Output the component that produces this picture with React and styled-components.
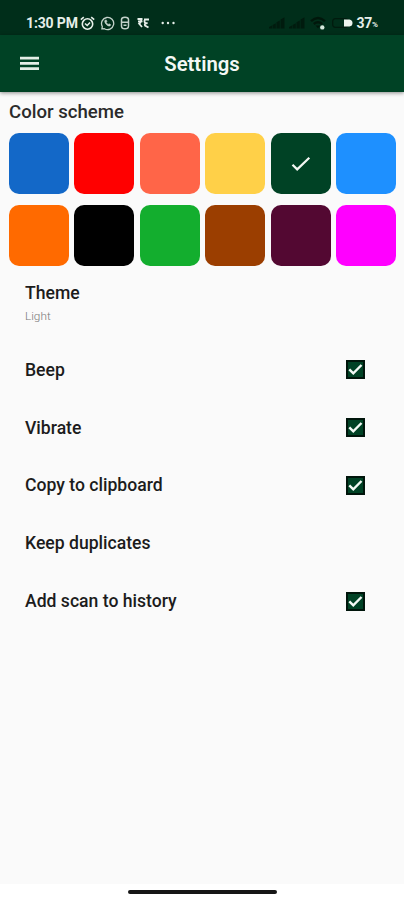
import React, { useState } from 'react';
import styled, { createGlobalStyle } from 'styled-components';

const GlobalStyle = createGlobalStyle`
  * {
    box-sizing: border-box;
  }

  body {
    margin: 0;
    background: #fafafa;
    font-family: Roboto, "Liberation Sans", sans-serif;
  }
`;

const Screen = styled.div`
  display: flex;
  flex-direction: column;
  width: 404px;
  height: 900px;
  background: #fafafa;
  color: #1c1c1c;
  overflow: hidden;
`;

const StatusBar = styled.div`
  display: flex;
  justify-content: space-between;
  height: 35px;
  flex-shrink: 0;
  padding: 10px 25px 0 26px;
  background: #002e1a;
  color: #e6efe9;
`;

const StatusGroup = styled.div`
  display: flex;
  align-items: center;
  height: 26px;
`;

const Clock = styled.span`
  width: 54px;
  font-size: 14px;
  font-weight: 700;
  letter-spacing: -0.15px;
  white-space: nowrap;
`;

const StatusIcon = styled.svg`
  display: block;
  flex-shrink: 0;
  margin-left: ${props => props.$gap || 0}px;
`;

const BatteryLevel = styled.span`
  margin-left: 4px;
  font-size: 14px;
  font-weight: 700;
  letter-spacing: -0.3px;
`;

const Percent = styled.span`
  width: 7px;
  padding-top: 3px;
  font-size: 8px;
  font-weight: 700;
`;

const Header = styled.header`
  display: grid;
  grid-template-columns: 60px 1fr 60px;
  align-items: center;
  height: 57px;
  flex-shrink: 0;
  background: #004225;
  color: #f4f8f5;
  box-shadow: 0 1px 4px rgba(0, 0, 0, 0.45);
  z-index: 1;
`;

const MenuButton = styled.button`
  display: flex;
  padding: 0 0 0 20px;
  border: 0;
  background: none;
`;

const Title = styled.h1`
  margin: 0;
  font-size: 20.3px;
  font-weight: 600;
  line-height: 24px;
  text-align: center;
`;

const Content = styled.main`
  flex: 1;
`;

const SectionTitle = styled.h2`
  margin: 0;
  padding: 9px 9px 0;
  font-size: 18.6px;
  font-weight: 500;
  line-height: 22px;
  color: #2b2b2b;
`;

const Swatches = styled.div`
  display: grid;
  grid-template-columns: repeat(6, 60px);
  column-gap: 5.4px;
  row-gap: 11px;
  padding: 10px 9px 0;
`;

const Swatch = styled.button`
  display: flex;
  align-items: center;
  justify-content: center;
  height: 61px;
  padding: 0;
  border: 0;
  border-radius: 10px;
  background: ${props => props.$color};
`;

const ThemeItem = styled.div`
  height: 75px;
  padding: 17px 25px 0;
`;

const Label = styled.span`
  display: block;
  font-size: 17.6px;
  font-weight: 500;
  line-height: 20px;
`;

const Value = styled.span`
  display: block;
  margin-top: 6px;
  font-size: 11.8px;
  font-weight: 300;
  line-height: 14px;
  color: #777;
`;

const SettingItem = styled.div`
  display: flex;
  align-items: center;
  justify-content: space-between;
  height: 57.8px;
  padding: 0 39px 0 25px;
`;

const Checkbox = styled.button`
  display: flex;
  align-items: center;
  justify-content: center;
  width: 19px;
  height: 19px;
  padding: 0;
  border: 2px solid #00150b;
  background: #004225;
`;

const NavBar = styled.footer`
  display: flex;
  justify-content: center;
  height: 16px;
  flex-shrink: 0;
  padding-top: 6px;
  background: #fff;
`;

const NavHandle = styled.div`
  width: 149px;
  height: 4px;
  border-radius: 2px;
  background: #161616;
`;

const COLORS = [
  '#1368c8', '#ff0000', '#ff6548', '#ffd048', '#004225', '#1e90ff',
  '#ff6a00', '#000000', '#13ae2e', '#9b3e00', '#530832', '#ff00ff',
];

const SETTINGS = [
  { key: 'beep', label: 'Beep' },
  { key: 'vibrate', label: 'Vibrate' },
  { key: 'clipboard', label: 'Copy to clipboard' },
  { key: 'duplicates', label: 'Keep duplicates' },
  { key: 'history', label: 'Add scan to history' },
];

const AlarmIcon = () => (
  <StatusIcon $gap={0} width="15" height="15" viewBox="0 0 15 15" fill="none" stroke="currentColor" strokeWidth="1.6">
    <circle cx="7.5" cy="8" r="5.2" />
    <path d="M.8 3.6l3-2.5M14.2 3.6l-3-2.5M5 7.5l2.2 2L10 6.5" />
  </StatusIcon>
);

const CallIcon = () => (
  <StatusIcon $gap={5} width="15" height="15" viewBox="0 0 15 15" fill="none" stroke="currentColor" strokeWidth="1.3" opacity="0.85">
    <path d="M1.9 12.9l.4-2.4A6.1 6.1 0 1 1 4.4 12.700z" />
    <path d="M5 4.2c-1.4 2 2.4 6.6 5.1 5.8l.6-1.4-1.7-.9-.8.7C7.3 8 6.5 7 6.3 6.3l.7-.8-.7-1.6z" fill="currentColor" strokeWidth="0.5" />
  </StatusIcon>
);

const LockIcon = () => (
  <StatusIcon $gap={5} width="10" height="14" viewBox="0 0 10 14" fill="none" stroke="currentColor" strokeWidth="1.5" opacity="0.85">
    <path d="M1.5 6V3.5Q1.5 1.200 5 1.200t3.500 2.300V6M1.500 6.200h7V10Q8.500 12.800 5 12.800T1.500 10zM3.500 9.300h3" />
  </StatusIcon>
);

const RupeeIcon = () => (
  <StatusIcon $gap={7} width="13" height="12" viewBox="0 0 13 12" fill="none" stroke="currentColor" strokeWidth="1.8">
    <path d="M.5 2h5M1 4.3h4.5M2 2q3 0 2 2.5T1.5 6l3.500 4M7 2.500h5M11.500 2.500Q7 2 7.500 4.500t3 1.500Q7 6.500 8 8.500l3.500 2" />
  </StatusIcon>
);

const MoreIcon = () => (
  <StatusIcon $gap={11} width="15" height="4" viewBox="0 0 15 4" fill="currentColor">
    <circle cx="1.7" cy="2" r="1.2" />
    <circle cx="7" cy="2" r="1.2" />
    <circle cx="12.5" cy="2" r="1.2" />
  </StatusIcon>
);

const SignalIcon = ({ gap }) => (
  <StatusIcon $gap={gap} width="16" height="12" viewBox="0 0 16 12" fill="#001b0e">
    <path d="M0 11.5V10l3-1.5v3zM3.6 11.5V8l3.2-1.7v5.2zM7.5 11.5V5.3l3.3-1.8v8zM11.6 11.5V2.4L15.5.3v11.2z" />
  </StatusIcon>
);

const WifiIcon = () => (
  <StatusIcon $gap={5} width="17" height="14" viewBox="0 0 17 14" fill="none" stroke="#00170b" strokeWidth="2.4">
    <path d="M1 5.2Q8 -1.2 15 5.2M3.8 8Q8 4.4 12.2 8" />
    <path d="M5.5 9.5h5L8 12.3z" fill="#00170b" stroke="none" />
    <circle cx="12.3" cy="11.4" r="2.2" fill="#d6e8dc" stroke="none" />
  </StatusIcon>
);

const BatteryIcon = () => (
  <StatusIcon $gap={5} width="21" height="10" viewBox="0 0 21 10">
    <rect x=".7" y=".7" width="15" height="8.6" rx="2.5" fill="none" stroke="#001b0e" strokeWidth="1.3" />
    <path d="M12 1.5h5.5Q20.5 2 20.5 5t-3 3.5H12z" fill="#edf5ef" />
  </StatusIcon>
);

const MenuIcon = () => (
  <svg width="20" height="15" viewBox="0 0 20 15" fill="#e4eee6">
    <path d="M0 .8h19v2.700H0zM0 6h19v2.700H0zM0 11.200h19v2.700H0z" />
  </svg>
);

const SwatchCheck = () => (
  <svg width="20" height="16" viewBox="0 0 20 16" fill="none" stroke="#f3f7f3" strokeWidth="2.2">
    <path d="M1.5 8.7l4.7 4.7L18.3 1.7" />
  </svg>
);

const CheckMark = () => (
  <svg width="15" height="13" viewBox="0 0 15 13" fill="none" stroke="#f4faf6" strokeWidth="2.4">
    <path d="M1.3 6.3l4 4L13.5 2" />
  </svg>
);

const App = () => {
  const [color, setColor] = useState('#004225');
  const [options, setOptions] = useState({
    beep: true,
    vibrate: true,
    clipboard: true,
    duplicates: false,
    history: true,
  });

  const toggle = key => setOptions(prev => ({ ...prev, [key]: !prev[key] }));

  return (
    <Screen>
      <GlobalStyle />
      <StatusBar>
        <StatusGroup>
          <Clock>1:30 PM</Clock>
          <AlarmIcon />
          <CallIcon />
          <LockIcon />
          <RupeeIcon />
          <MoreIcon />
        </StatusGroup>
        <StatusGroup>
          <SignalIcon />
          <SignalIcon gap={4} />
          <WifiIcon />
          <BatteryIcon />
          <BatteryLevel>37</BatteryLevel>
          <Percent>%</Percent>
        </StatusGroup>
      </StatusBar>
      <Header>
        <MenuButton aria-label="Menu">
          <MenuIcon />
        </MenuButton>
        <Title>Settings</Title>
      </Header>
      <Content>
        <SectionTitle>Color scheme</SectionTitle>
        <Swatches>
          {COLORS.map(item => (
            <Swatch key={item} $color={item} aria-label={item} onClick={() => setColor(item)}>
              {item === color && <SwatchCheck />}
            </Swatch>
          ))}
        </Swatches>
        <ThemeItem>
          <Label>Theme</Label>
          <Value>Light</Value>
        </ThemeItem>
        {SETTINGS.map(item => (
          <SettingItem key={item.key} onClick={() => toggle(item.key)}>
            <Label>{item.label}</Label>
            {options[item.key] && (
              <Checkbox aria-label={item.label}>
                <CheckMark />
              </Checkbox>
            )}
          </SettingItem>
        ))}
      </Content>
      <NavBar>
        <NavHandle />
      </NavBar>
    </Screen>
  );
};

export default App;
